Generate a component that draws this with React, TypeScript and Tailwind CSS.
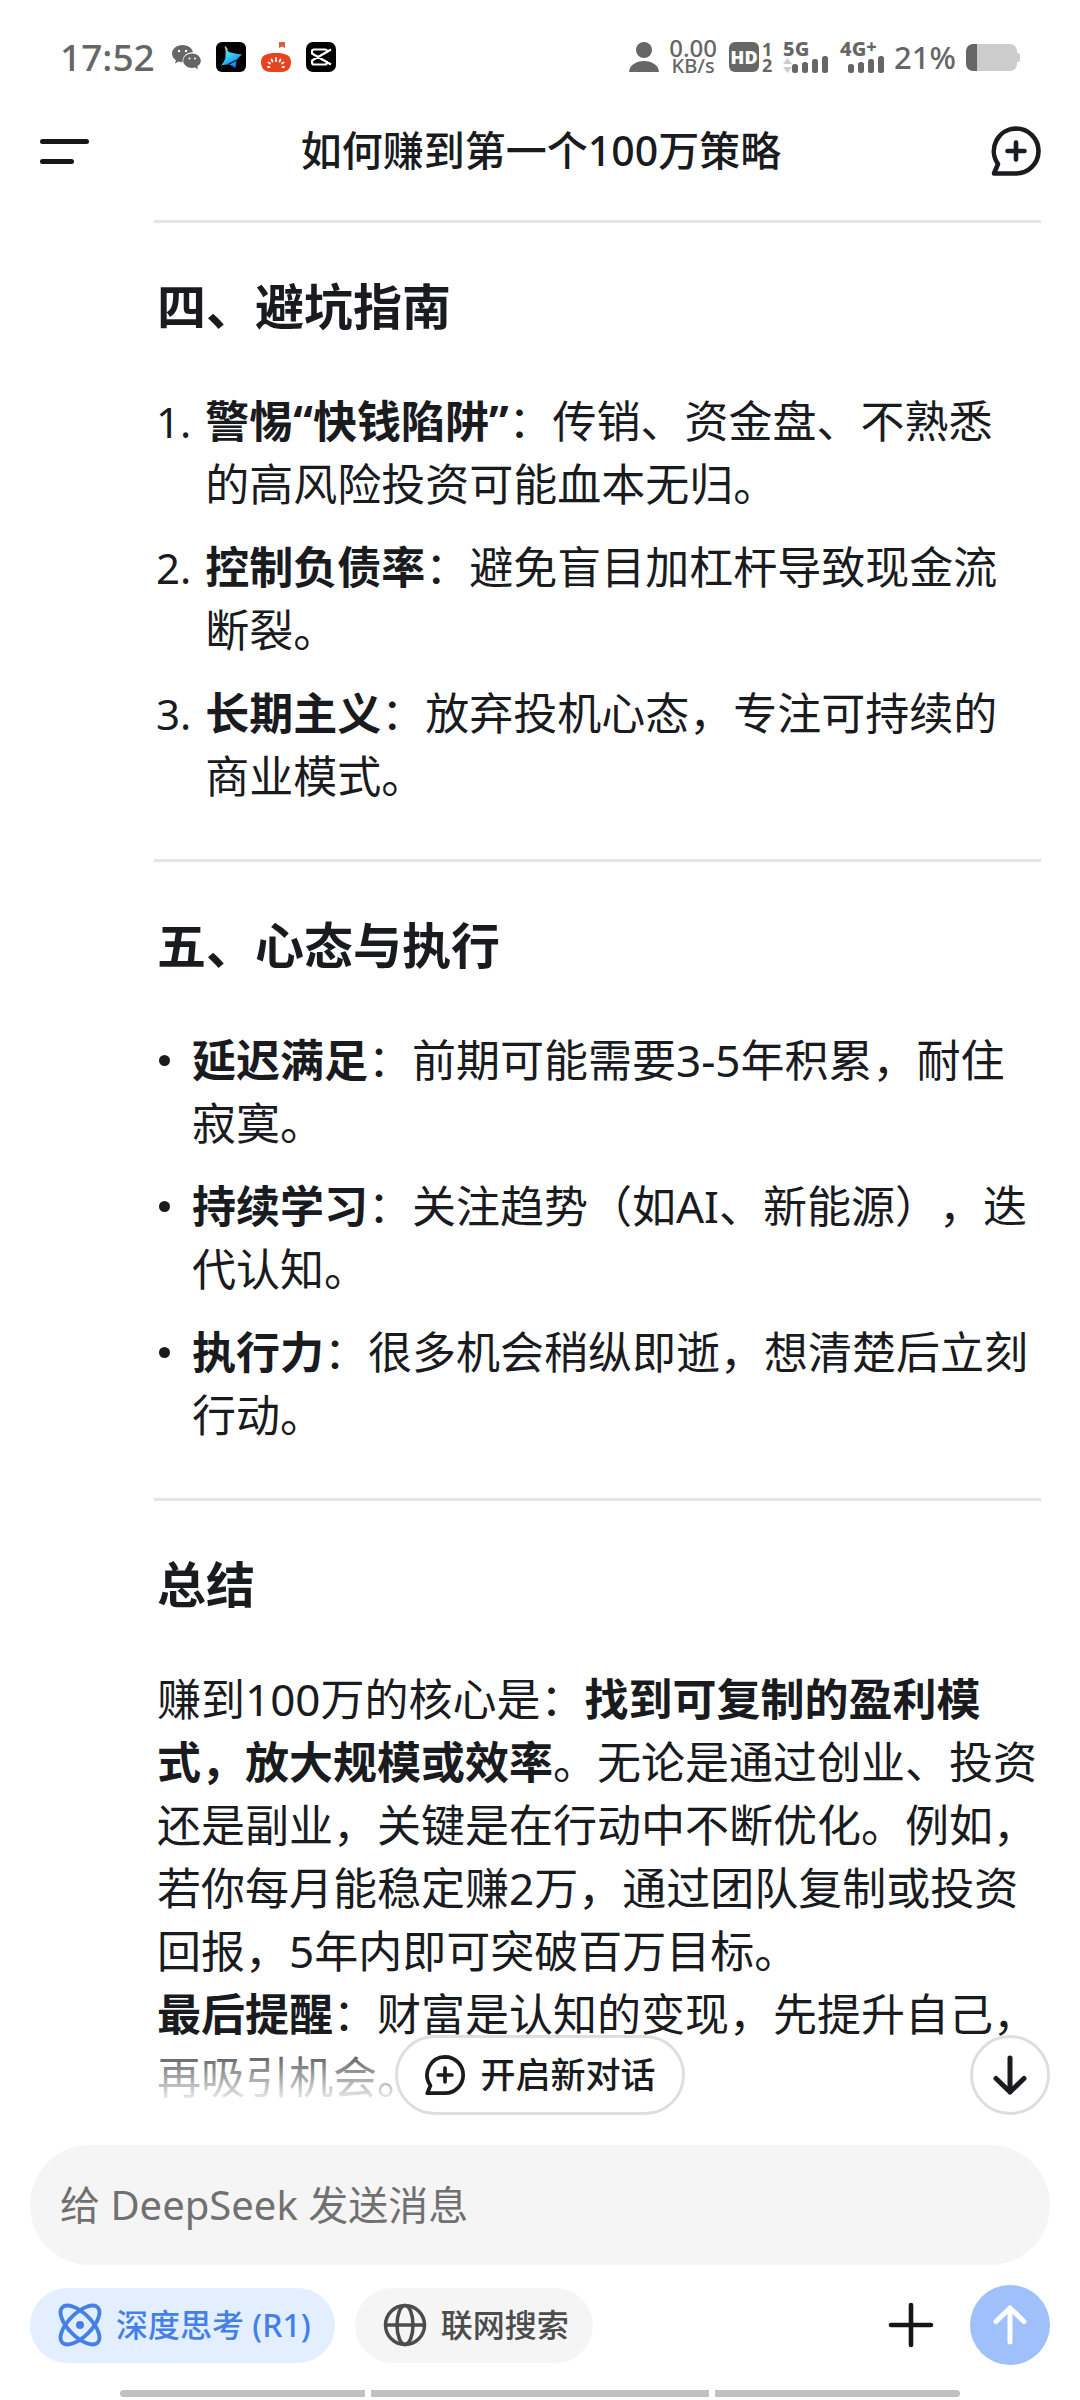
import type { ReactNode } from 'react';

interface Point {
  term: string;
  text: string;
}

const pitfalls: Point[] = [
  { term: '警惕“快钱陷阱”', text: '：传销、资金盘、不熟悉的高风险投资可能血本无归。' },
  { term: '控制负债率', text: '：避免盲目加杠杆导致现金流断裂。' },
  { term: '长期主义', text: '：放弃投机心态，专注可持续的商业模式。' },
];

const mindset: Point[] = [
  { term: '延迟满足', text: '：前期可能需要3-5年积累，耐住寂寞。' },
  { term: '持续学习', text: '：关注趋势（如AI、新能源），迭代认知。' },
  { term: '执行力', text: '：很多机会稍纵即逝，想清楚后立刻行动。' },
];

function ChatPlusIcon({ className }: { className?: string }) {
  return (
    <svg viewBox="0 0 52 52" fill="none" stroke="currentColor" strokeWidth="4.6" strokeLinecap="round" strokeLinejoin="round" className={className}>
      <path d="M26 3.500a22.500 22.500 0 0 1 0 45H4L8 39A22.500 22.500 0 0 1 26 3.500Z" />
      <path d="M26 17.500v17M17.500 26h17" />
    </svg>
  );
}

function SignalBars() {
  return (
    <svg viewBox="0 0 36 17" fill="#666" className="h-[17px] w-9">
      <rect x="0" y="8" width="6" height="9" rx="2.5" />
      <rect x="10" y="6" width="6" height="11" rx="2.5" />
      <rect x="20" y="3" width="6" height="14" rx="2.5" />
      <rect x="30" y="0" width="6" height="17" rx="2.5" />
    </svg>
  );
}

function StatusBar() {
  return (
    <div className="flex h-[114px] items-center justify-between pl-[60px] pr-[60px] text-[#666]">
      <div className="flex items-center">
        <span className="w-28 text-[37px] font-medium leading-10">17:52</span>
        {/* WeChat */}
        <svg viewBox="0 0 30 26" className="h-[26px] w-[30px]">
          <path fill="#666" d="M10.500 1C4.700 1 0 4.800 0 9.600c0 2.700 1.500 5.100 3.900 6.700L3 19.500l3.700-1.900c1.200.3 2.500.6 3.800.6C10 12 15 8 21 8.200 20 4 15.800 1 10.500 1Z" />
          <path fill="#666" d="M20.200 9.500c-5 0-9 3.200-9 7.200s4 7.200 9 7.200c1 0 2-.2 2.900-.4l3 1.700-.8-2.900c2.200-1.300 3.500-3.300 3.500-5.600 0-4-3.900-7.200-8.600-7.200Z" />
          <g fill="#fff">
            <circle cx="7" cy="7" r="1.200" />
            <circle cx="14" cy="7" r="1.200" />
            <circle cx="17.500" cy="14.500" r="1" />
            <circle cx="23" cy="14.500" r="1" />
          </g>
        </svg>
        <svg viewBox="0 0 30 30" className="ml-3.5 size-[30px]">
          <defs>
            <linearGradient id="star" x1="0" y1="0" x2="0.600" y2="1">
              <stop offset="0" stopColor="#8ff0e6" />
              <stop offset="0.500" stopColor="#35cdf0" />
              <stop offset="1" stopColor="#1673f0" />
            </linearGradient>
          </defs>
          <rect width="30" height="30" rx="6" />
          <path fill="url(#star)" d="M9 4.500Q11.500 10 14.500 10.500 20 12 26 12.500 21.500 16 20.500 18.500 20 22 19.500 26 16 23.500 13.500 22.500 10 22 5 23.500 9.500 18 9.500 14.500 10 10 9 4.500Z" />
          <path stroke="#04101c" strokeWidth="1.200" d="M12 22.500 22 17.500" />
          <path stroke="#f6b26b" strokeWidth="1.300" d="M9 4.500l2.500 3.500" />
        </svg>
        {/* Tomato */}
        <svg viewBox="0 0 30 30" className="ml-[15px] size-[30px]">
          <path fill="#dd5b3d" d="M18 0h6v6l-3-1.500L18 6Z" />
          <path fill="#e8431c" d="M15 11c9.500 0 15 2.500 15 9s-4 10-9 10H9c-5 0-9-3.500-9-10s5.500-9 15-9Z" />
          <path stroke="#fff" strokeWidth="1.800" strokeLinecap="round" d="M15 16v3M10.500 17.500l1 2M19.500 17.500l-1 2M7.500 20.500l1.500 1M22.500 20.500l-1.500 1M7 25h1.500M23 25h-1.500" />
        </svg>
        {/* CapCut */}
        <svg viewBox="0 0 30 30" className="ml-[15px] size-[30px]">
          <rect width="30" height="30" rx="7" />
          <path fill="none" stroke="#fff" strokeWidth="2.200" strokeLinejoin="round" d="M25 7.500 6 18.500v2a2 2 0 0 0 2 2h11a2 2 0 0 0 2-2v-1.500M25 22.500 6 11.500v-2a2 2 0 0 1 2-2h11a2 2 0 0 1 2 2V11" />
        </svg>
      </div>

      <div className="flex items-center">
        <svg viewBox="0 0 30 30" fill="#666" className="size-[30px]">
          <circle cx="15" cy="8" r="8" />
          <path d="M0 30c.5-7 7-11 15-11s14.500 4 15 11Z" />
        </svg>
        <div className="ml-2 flex w-[52px] flex-col items-center font-medium">
          <span className="text-2xl leading-[18px]">0.00</span>
          <span className="text-xl leading-[18px]">KB/s</span>
        </div>
        <div className="ml-2.5 flex size-[30px] items-center justify-center rounded-md bg-[#666] text-lg font-black text-white">HD</div>
        <div className="ml-0.5 flex w-3 flex-col items-center text-lg font-bold leading-4">
          <span>1</span>
          <span>2</span>
        </div>
        <div className="ml-2.5 flex flex-col">
          <span className="text-xl font-extrabold leading-[14px]">5G</span>
          <div className="flex items-end">
            <svg viewBox="0 0 9 15" fill="#ccc" className="h-[15px] w-[9px]">
              <path d="M4.500 0 9 6H0ZM4.500 15 0 9h9Z" />
            </svg>
            <SignalBars />
          </div>
        </div>
        <div className="ml-3 flex flex-col">
          <span className="flex text-xl font-extrabold leading-[14px]">
            4G<span className="text-lg leading-2">+</span>
          </span>
          <div className="flex justify-end pl-2">
            <SignalBars />
          </div>
        </div>
        <span className="ml-2.5 text-[31px] font-medium leading-8">21%</span>
        <svg viewBox="0 0 54 27" className="ml-2.5 h-[27px] w-[54px]">
          <path fill="#ccc" d="M11 0h33a7 7 0 0 1 7 7v2h1a2 2 0 0 1 2 2v5a2 2 0 0 1-2 2h-1v2a7 7 0 0 1-7 7H11Z" />
          <path fill="#666" d="M7 0h4v27H7a7 7 0 0 1-7-7V7a7 7 0 0 1 7-7Z" />
        </svg>
      </div>
    </div>
  );
}

function Header() {
  return (
    <header className="flex h-[74px] items-center justify-between pl-10 pr-[38px]">
      <button aria-label="菜单" className="flex size-[52px] flex-col justify-center gap-[15px]">
        <span className="h-[5px] w-[49px] rounded-full bg-[#161719]" />
        <span className="h-[5px] w-[34px] rounded-full bg-[#161719]" />
      </button>
      <h1 className="pb-0.5 text-[41px] font-medium leading-[60px]">如何赚到第一个100万策略</h1>
      <button aria-label="新对话">
        <ChatPlusIcon className="size-[52px]" />
      </button>
    </header>
  );
}

function Section({ title, children }: { title: string; children: ReactNode }) {
  return (
    <section className="border-t-[3px] border-[#e5e5e5] pb-[51px] pt-[51px] last:pb-0">
      <h2 className="mb-[52px] pl-[3px] text-[49px] font-bold leading-[64px]">{title}</h2>
      {children}
    </section>
  );
}

function PointText({ point }: { point: Point }) {
  return (
    <p>
      <strong className="font-bold">{point.term}</strong>
      {point.text}
    </p>
  );
}

function Composer() {
  return (
    <footer className="px-[30px]">
      <input
        type="text"
        aria-label="消息"
        placeholder="给 DeepSeek 发送消息"
        className="block h-[120px] w-full rounded-full bg-[#f5f5f5] px-[30px] pb-0.5 text-[40px] outline-none placeholder:text-[#707070]"
      />
      <div className="mt-5 flex h-20 items-center">
        <button className="flex h-[75px] items-center gap-3.5 rounded-full bg-[#e3efff] pl-7 pr-6 text-[32px] font-medium text-[#4480e8]">
          <svg viewBox="0 0 44 44" fill="none" stroke="currentColor" strokeWidth="3.800" className="size-11">
            <ellipse cx="22" cy="22" rx="25" ry="11.500" transform="rotate(45 22 22)" />
            <ellipse cx="22" cy="22" rx="25" ry="11.500" transform="rotate(-45 22 22)" />
            <circle cx="22" cy="22" r="4" fill="currentColor" stroke="none" />
          </svg>
          深度思考 (R1)
        </button>
        <button className="ml-5 flex h-[75px] items-center gap-3.5 rounded-full bg-[#f5f5f5] pl-7 pr-6 text-[32px] font-medium text-[#4c4c4c]">
          <svg viewBox="0 0 44 44" fill="none" stroke="currentColor" strokeWidth="3.500" className="size-11">
            <circle cx="22" cy="22" r="19.500" />
            <ellipse cx="22" cy="22" rx="8" ry="19.500" />
            <path d="M2.500 22h39" />
          </svg>
          联网搜索
        </button>
        <button aria-label="添加" className="ml-auto mr-9">
          <svg viewBox="0 0 46 46" stroke="#161616" strokeWidth="4.600" strokeLinecap="round" className="size-[46px]">
            <path d="M23 3v40M3 23h40" />
          </svg>
        </button>
        <button aria-label="发送" className="flex size-20 items-center justify-center rounded-full bg-[#9fc0fb]">
          <svg viewBox="0 0 40 44" fill="none" stroke="#fff" strokeWidth="5" strokeLinecap="round" strokeLinejoin="round" className="h-11 w-10">
            <path d="M20 39V5M6 18.500 20 5l14 13.500" />
          </svg>
        </button>
      </div>
    </footer>
  );
}

export default function App() {
  return (
    <div
      lang="zh-CN"
      className="flex min-h-screen flex-col bg-white font-['Noto_Sans','Noto_Sans_CJK_SC',sans-serif] text-[#191b1f] [text-spacing-trim:space-all]"
    >
      <StatusBar />
      <Header />

      <main className="relative pt-8 pb-9 text-[44px] leading-[63px]">
        <article className="pl-[154px] pr-[39px]">
          <Section title="四、避坑指南">
            <ol className="flex flex-col gap-5 pl-[2px] pr-2">
              {pitfalls.map((point, index) => (
                <li key={point.term} className="flex gap-3.5">
                  <span className="text-[42px]">{index + 1}.</span>
                  <PointText point={point} />
                </li>
              ))}
            </ol>
          </Section>

          <Section title="五、心态与执行">
            <ul className="flex flex-col gap-5 pl-[5px] pr-2">
              {mindset.map((point) => (
                <li key={point.term} className="flex gap-[22px]">
                  <span className="mt-[26px] size-[11px] shrink-0 rounded-full bg-[#191b1f]" />
                  <PointText point={point} />
                </li>
              ))}
            </ul>
          </Section>

          <Section title="总结">
            <p className="pl-[3px]">
              赚到100万的核心是：<strong className="font-bold">找到可复制的盈利模式，放大规模或效率</strong>
              。无论是通过创业、投资还是副业，关键是在行动中不断优化。例如，若你每月能稳定赚2万，通过团队复制或投资回报，5年内即可突破百万目标。
              <br />
              <strong className="font-bold">最后提醒</strong>：财富是认知的变现，先提升自己，再吸引机会。
            </p>
          </Section>
        </article>

        {/* Fade above the composer */}
        <div className="pointer-events-none absolute inset-x-0 bottom-0 h-28 bg-linear-to-t from-white from-35% to-white/0" />

        <div className="absolute inset-x-0 bottom-[30px] flex justify-center">
          <button className="flex h-20 items-center gap-3.5 rounded-full border-[3px] border-[#dedede] bg-white px-[26px] text-[35px] font-medium leading-10">
            <ChatPlusIcon className="size-[42px]" />
            开启新对话
          </button>
        </div>
        <button aria-label="滚动到底部" className="absolute bottom-[30px] right-[30px] flex size-20 items-center justify-center rounded-full border-[3px] border-[#dedede] bg-white">
          <svg viewBox="0 0 40 44" fill="none" stroke="currentColor" strokeWidth="5" strokeLinecap="round" strokeLinejoin="round" className="h-11 w-10">
            <path d="M20 5v34M6 25.500 20 39l14-13.500" />
          </svg>
        </button>
      </main>

      <Composer />

      {/* Gesture hints */}
      <div className="mt-auto flex gap-1.5 px-[120px] pb-[3px]">
        <span className="h-[7px] flex-1 rounded-l-full bg-[#c0c0c0]" />
        <span className="h-[7px] flex-[1.38] bg-[#c0c0c0]" />
        <span className="h-[7px] flex-1 rounded-r-full bg-[#c0c0c0]" />
      </div>
    </div>
  );
}
